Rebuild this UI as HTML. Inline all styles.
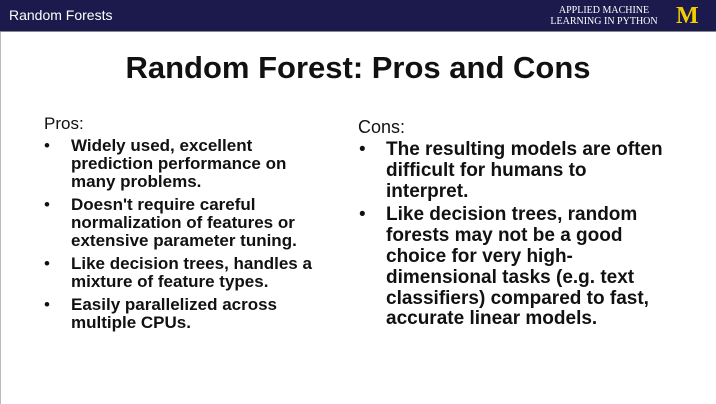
<!DOCTYPE html>
<html><head><style>
body{margin:0;width:716px;height:404px;background:#fff;position:relative;overflow:hidden;font-family:"Liberation Sans",sans-serif;}
.hdr{position:absolute;left:0;top:0;width:716px;height:31px;background:#1c1a4c;border-bottom:1px solid #888;}
.hdr .t{position:absolute;left:9px;top:7px;color:#fff;font-size:14px;}
.hdr .r{position:absolute;left:548px;top:5px;color:#fff;font-family:"Liberation Serif",serif;font-size:10px;line-height:11px;text-align:center;width:112px;}
.hdr .m{position:absolute;left:676px;top:4px;color:#f2cd00;font-family:"Liberation Serif",serif;font-weight:bold;font-size:24px;line-height:24px;}
.lb{position:absolute;left:0;top:32px;width:1px;height:372px;background:#bbb;}
h1{position:absolute;top:50px;left:0;width:716px;margin:0;text-align:center;font-size:31px;font-weight:bold;color:#111;}
.col{position:absolute;color:#111;white-space:nowrap;}
.col .h{font-size:17px;line-height:20px;}
ul{margin:0;padding:0;list-style:none;}
li{position:relative;font-weight:bold;}
li:before{content:"•";position:absolute;left:-27px;font-weight:normal;}
.p{left:44px;top:114px;}
.p ul{margin-left:27px;margin-top:3px;}
.p li{font-size:17px;line-height:18px;margin-bottom:5px;}
.c{left:358px;top:117px;}
.c .h{font-size:18px;}
.c ul{margin-left:28px;margin-top:3px;}
.c li{font-size:19px;line-height:20.8px;margin-bottom:3px;}
</style></head><body>
<div class="hdr"><div class="t">Random Forests</div><div class="r">APPLIED MACHINE<br>LEARNING IN PYTHON</div><div class="m">M</div></div>
<div class="lb"></div>
<h1>Random Forest: Pros and Cons</h1>
<div class="col p"><div class="h">Pros:</div><ul>
<li>Widely used, excellent<br>prediction performance on<br>many problems.</li>
<li>Doesn't require careful<br>normalization of features or<br>extensive parameter tuning.</li>
<li>Like decision trees, handles a<br>mixture of feature types.</li>
<li>Easily parallelized across<br>multiple CPUs.</li></ul></div>
<div class="col c"><div class="h">Cons:</div><ul>
<li>The resulting models are often<br>difficult for humans to<br>interpret.</li>
<li>Like decision trees, random<br>forests may not be a good<br>choice for very high-<br>dimensional tasks (e.g. text<br>classifiers) compared to fast,<br>accurate linear models.</li></ul></div>
</body></html>
